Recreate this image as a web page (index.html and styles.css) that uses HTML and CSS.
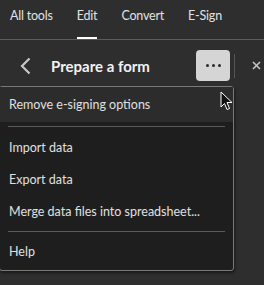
FILE: index.html
```html
<!DOCTYPE html>
<html lang="en">
<head>
    <meta charset="UTF-8">
    <title>Prepare a form</title>
    <link rel="stylesheet" href="styles.css">
</head>
<body>
    <div id="app">
        <div class="tabs">
            <span class="tab">All tools</span>
            <span class="tab active">Edit</span>
            <span class="tab">Convert</span>
            <span class="tab">E-Sign</span>
        </div>
        <div class="header">
            <svg class="back" width="12" height="18" viewBox="0 0 12 18">
                <path d="M9.5 1.5 L2 9 L9.5 16.5" fill="none" stroke="#c8c8c8" stroke-width="2.2"/>
            </svg>
            <span class="title">Prepare a form</span>
            <button class="more">
                <span class="dot"></span><span class="dot"></span><span class="dot"></span>
            </button>
            <span class="vline"></span>
            <svg class="close" width="9" height="9" viewBox="0 0 9 9">
                <path d="M1 1 L8 8 M8 1 L1 8" stroke="#c4c4c4" stroke-width="1.6"/>
            </svg>
        </div>

        <!-- menu abierto desde el boton ... -->
        <div class="menu">
            <div class="item hover">Remove e-signing options</div>
            <div class="sep first"></div>
            <div class="item">Import data</div>
            <div class="item">Export data</div>
            <div class="item">Merge data files into spreadsheet...</div>
            <div class="sep"></div>
            <div class="item">Help</div>
        </div>

        <svg class="cursor" width="13" height="20" viewBox="0 0 13 20">
            <path d="M1 1 L1 16 L4.5 12.5 L7 18.5 L9.5 17.5 L7 11.5 L12 11.5 Z" fill="#111" stroke="#fff" stroke-width="1"/>
        </svg>
    </div>
</body>
</html>
```

FILE: styles.css
```css
body {
    margin: 0;
    background-color: #2e2e2e;
    font-family: Lato, "Noto Sans", sans-serif;
    color: #e2e2e2;
}

#app {
    position: relative;
    width: 264px;
    height: 285px;
    overflow: hidden;
}

.tabs {
    display: flex;
    gap: 24px;
    height: 39px;
    padding-left: 10px;
    border-bottom: 1px solid #5c5c5c;
}

.tab {
    height: 37px;
    line-height: 32px;
    font-size: 12.5px;
    letter-spacing: -0.2px;
    border-bottom: 2px solid transparent;
}

.tab.active {
    border-bottom-color: #ffffff;
}

.header {
    display: flex;
    align-items: center;
    height: 51px;
}

.back {
    margin-left: 20px;
}

.title {
    margin-left: 19px;
    font-size: 15px;
    font-weight: bold;
    color: #f2f2f2;
}

.more {
    display: flex;
    justify-content: center;
    align-items: center;
    gap: 3px;
    width: 34px;
    height: 31px;
    margin-left: auto;
    padding: 0;
    border: none;
    border-radius: 4px;
    background-color: #d5d5d5;
}

.dot {
    width: 3px;
    height: 3px;
    border-radius: 50%;
    background-color: #2a2a2a;
}

.vline {
    width: 1px;
    height: 24px;
    margin-left: 4px;
    background-color: #555;
}

.close {
    margin-left: 17px;
    margin-right: 3px;
}

.menu {
    position: absolute;
    top: 86px;
    left: -1px;
    width: 233px;
    padding-bottom: 2px;
    background-color: #1e1e1e;
    border: 1px solid #7a7a7a;
    border-radius: 3px;
    box-shadow: 1px 2px 3px rgba(0, 0, 0, 0.45);
}

.item {
    height: 32px;
    line-height: 32px;
    padding-left: 9px;
    font-size: 12.5px;
    color: #e0e0e0;
}

.item.hover {
    height: 35px;
    line-height: 35px;
    background-color: #2c2c2c;
}

.sep {
    height: 1px;
    margin: 3px 8px 4px 8px;
    background-color: #5a5a5a;
}

.sep.first {
    margin-top: 4px;
    margin-bottom: 5px;
}

.cursor {
    position: absolute;
    top: 91px;
    left: 220px;
}
```
